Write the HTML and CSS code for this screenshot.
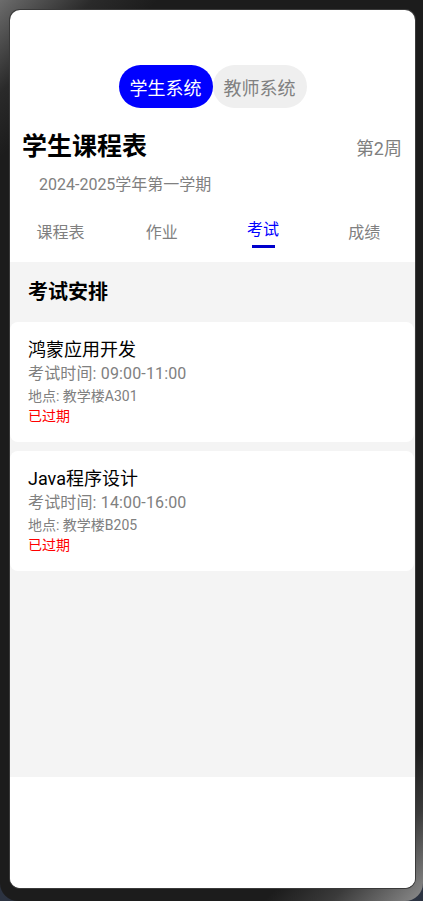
FILE: index.html
```html
<!DOCTYPE html>
<html lang="zh-CN">
<head>
<meta charset="utf-8">
<title>学生课程表</title>
<link rel="stylesheet" href="styles.css">
</head>
<body>
<div class="device">
  <div class="screen">
    <div class="switcher">
      <span class="pill pill-active">学生系统</span>
      <span class="pill">教师系统</span>
    </div>
    <div class="header">
      <h1 class="title">学生课程表</h1>
      <span class="week">第2周</span>
    </div>
    <div class="semester">2024-2025学年第一学期</div>
    <nav class="tabs">
      <div class="tab"><span>课程表</span></div>
      <div class="tab"><span>作业</span></div>
      <div class="tab tab-active"><span>考试</span><i class="underline"></i></div>
      <div class="tab"><span>成绩</span></div>
    </nav>
    <section class="content">
      <h2 class="section-title">考试安排</h2>
      <div class="card">
        <div class="course">鸿蒙应用开发</div>
        <div class="time">考试时间: 09:00-11:00</div>
        <div class="place">地点: 教学楼A301</div>
        <div class="status">已过期</div>
      </div>
      <div class="card">
        <div class="course">Java程序设计</div>
        <div class="time">考试时间: 14:00-16:00</div>
        <div class="place">地点: 教学楼B205</div>
        <div class="status">已过期</div>
      </div>
    </section>
    <div class="filler"></div>
  </div>
</div>
</body>
</html>
```
FILE: styles.css
```css
* { box-sizing: border-box; }
html, body {
  margin: 0;
  padding: 0;
  background: #2c3341;
}
body {
  font-family: Roboto, "Noto Sans CJK SC", sans-serif;
  width: 423px;
  height: 901px;
  overflow: hidden;
}
.device {
  width: 423px;
  height: 901px;
  padding: 10px 8px 13px 10px;
  border-radius: 0 0 18px 18px;
  background:
    linear-gradient(135deg, #6c6c6c 0%, #2a2a2a 7%, #1c1c1c 12%, #1c1c1c 88%, #3a3a3a 93%, #8c8c8c 100%);
  display: flex;
}
.screen {
  flex: 1;
  background: #ffffff;
  border-radius: 10px;
  overflow: hidden;
  display: flex;
  flex-direction: column;
  box-shadow: 0 0 0 1px #3a3a3a;
}
.switcher {
  display: flex;
  justify-content: center;
  padding-top: 55px;
}
.pill {
  height: 43px;
  width: 94px;
  border-radius: 22px;
  display: flex;
  align-items: center;
  justify-content: center;
  font-size: 18px;
  color: #808080;
  background: #efefef;
}
.pill-active {
  background: #0000ff;
  color: #ffffff;
}
.header {
  display: flex;
  align-items: center;
  justify-content: space-between;
  height: 40px;
  margin-top: 19px;
  padding: 0 13px 0 12px;
}
.title {
  margin: 0;
  font-size: 25px;
  font-weight: 700;
  color: #000000;
  line-height: 32px;
}
.week {
  font-size: 18px;
  color: #808080;
}
.semester {
  margin-top: 7px;
  padding-left: 29px;
  font-size: 16px;
  line-height: 22px;
  color: #808080;
}
.tabs {
  display: grid;
  grid-template-columns: repeat(4, 1fr);
  height: 58px;
  margin-top: 8px;
}
.tab {
  display: flex;
  flex-direction: column;
  align-items: center;
  justify-content: center;
  gap: 4px;
  font-size: 16px;
  line-height: 22px;
  color: #808080;
}
.tab-active {
  color: #0000ff;
}
.underline {
  display: block;
  width: 23px;
  height: 3px;
  background: #0000cc;
}
.content {
  height: 515px;
  background: #f4f4f4;
  padding-top: 16px;
}
.section-title {
  margin: 0 0 16px 0;
  padding-left: 18px;
  font-size: 20px;
  line-height: 28px;
  font-weight: 700;
  color: #000000;
}
.card {
  background: #ffffff;
  border-radius: 8px;
  padding: 16px 18px 16px 18px;
  margin-bottom: 9px;
  margin-right: 1px;
}
.course {
  font-size: 18px;
  line-height: 24px;
  color: #000000;
}
.time {
  font-size: 16px;
  line-height: 24px;
  color: #808080;
  letter-spacing: 0.15px;
}
.place {
  font-size: 14px;
  line-height: 20px;
  color: #808080;
}
.status {
  font-size: 14px;
  line-height: 20px;
  color: #ff0000;
}
.filler {
  flex: 1;
  background: #ffffff;
}
```
